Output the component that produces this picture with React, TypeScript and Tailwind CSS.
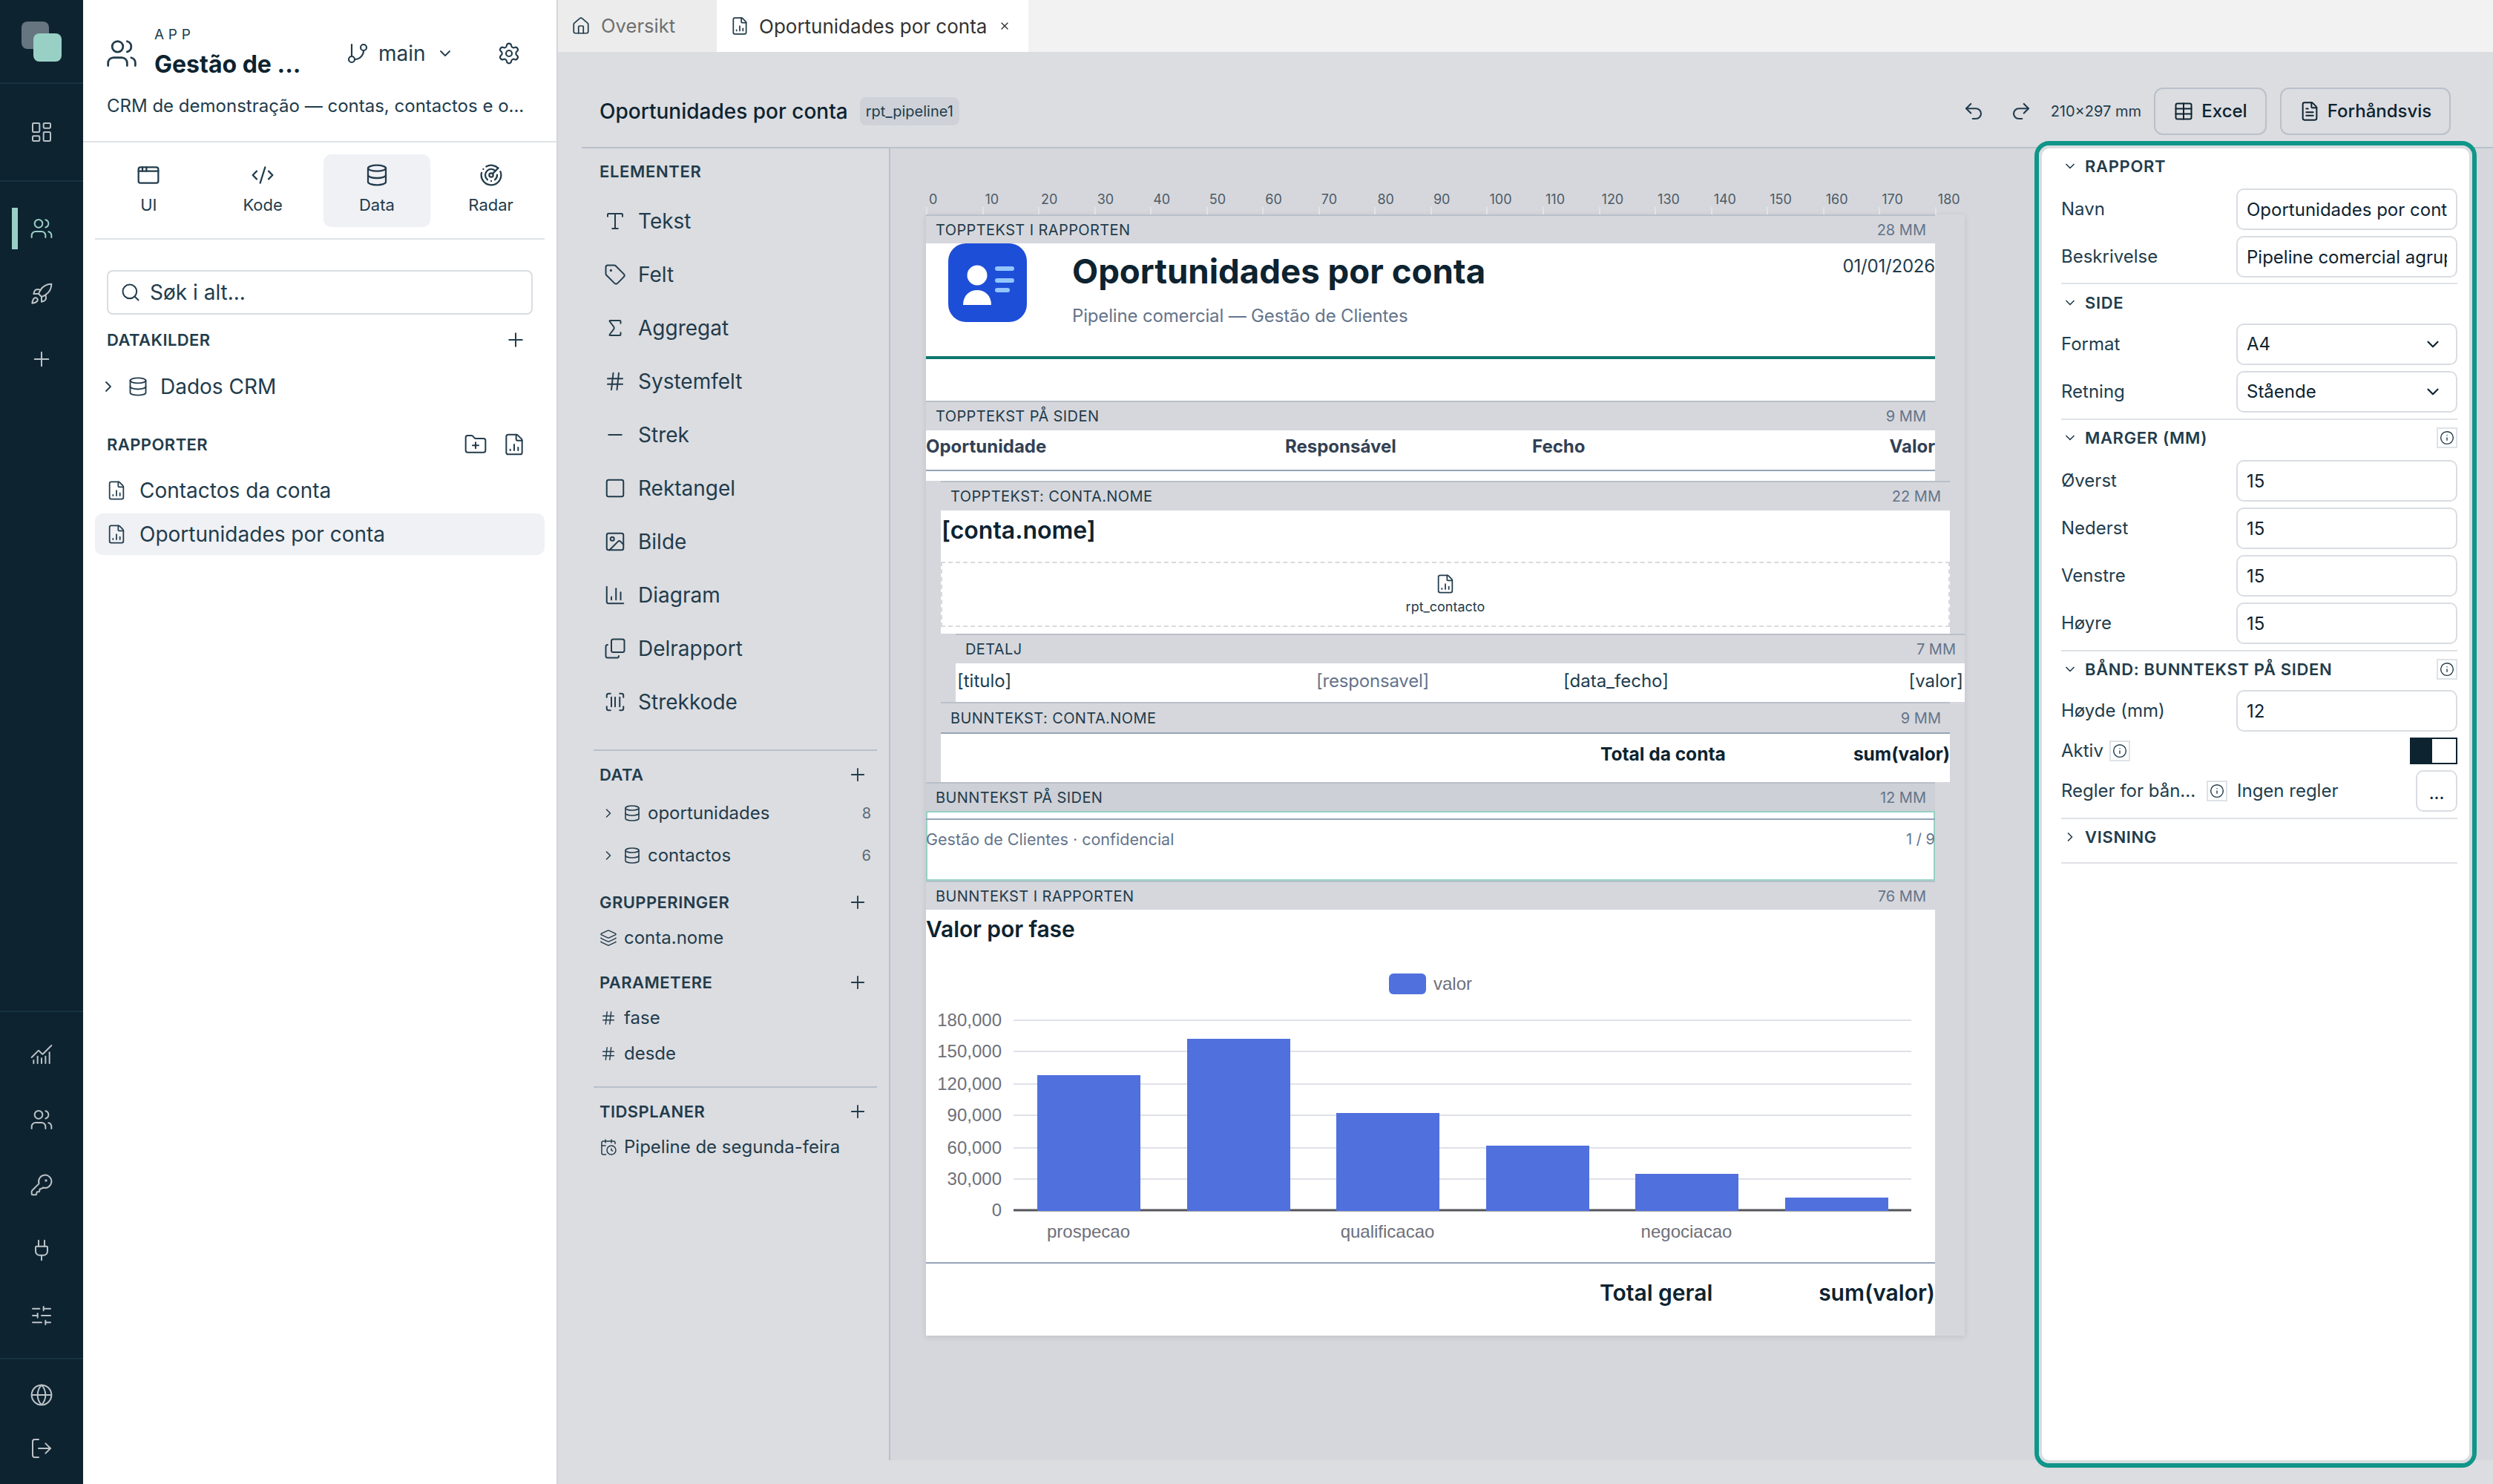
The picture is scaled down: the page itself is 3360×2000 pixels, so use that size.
import type { ReactNode } from 'react';
import {
  AppWindow,
  CalendarClock,
  ChartColumn,
  ChartNoAxesCombined,
  ChevronDown,
  ChevronRight,
  CodeXml,
  Copy,
  Database,
  FileChartColumn,
  FileText,
  FolderPlus,
  GitBranch,
  Globe,
  Hash,
  House,
  Image,
  Info,
  KeyRound,
  Layers,
  LayoutDashboard,
  LogOut,
  Minus,
  Plug,
  Plus,
  Radar,
  Redo2,
  Rocket,
  ScanBarcode,
  Search,
  Settings,
  Sigma,
  SlidersHorizontal,
  Square,
  Table,
  Tag,
  Type,
  Undo2,
  Users,
  X,
} from 'lucide-react';

const elements = [
  { label: 'Tekst', icon: Type },
  { label: 'Felt', icon: Tag },
  { label: 'Aggregat', icon: Sigma },
  { label: 'Systemfelt', icon: Hash },
  { label: 'Strek', icon: Minus },
  { label: 'Rektangel', icon: Square },
  { label: 'Bilde', icon: Image },
  { label: 'Diagram', icon: ChartColumn },
  { label: 'Delrapport', icon: Copy, flip: true },
  { label: 'Strekkode', icon: ScanBarcode },
];

const tabs = [
  { label: 'UI', icon: AppWindow },
  { label: 'Kode', icon: CodeXml },
  { label: 'Data', icon: Database, active: true },
  { label: 'Radar', icon: Radar },
];

const bars = [
  { x: 150, top: 169 },
  { x: 352, top: 120 },
  { x: 553, top: 220 },
  { x: 755, top: 264 },
  { x: 956, top: 302 },
  { x: 1158, top: 334 },
];

const yAxis = [
  { label: '180,000', y: 95 },
  { label: '150,000', y: 137 },
  { label: '120,000', y: 181 },
  { label: '90,000', y: 223 },
  { label: '60,000', y: 267 },
  { label: '30,000', y: 309 },
  { label: '0', y: 351 },
];

const RULER = Array.from({ length: 19 }, (_, i) => i * 10);

function RailDivider() {
  return <div className="h-[2px] w-full bg-[#17323f]" />;
}

function RailIcon({ children }: { children: ReactNode }) {
  return <div className="flex h-[88px] w-full items-center justify-center text-[#bcc2c6]">{children}</div>;
}

function Rail() {
  return (
    <aside className="flex h-full w-[112px] shrink-0 flex-col bg-[#0d2330]">
      <div className="flex h-[111px] items-start pl-[29px] pt-[29px]">
        <div className="h-[37px] w-[37px] rounded-[8px] bg-[#66757f]">
          <div className="ml-[16px] mt-[16px] h-[38px] w-[38px] rounded-[8px] bg-[#99d0c6]" />
        </div>
      </div>
      <RailDivider />
      <div className="flex h-[130px] items-center justify-center text-[#bcc2c6]">
        <LayoutDashboard size={32} strokeWidth={1.5} />
      </div>
      <RailDivider />
      <div className="mt-[19px] flex h-[88px] items-center">
        <div className="ml-[16px] h-[56px] w-[8px] bg-[#99d0c6]" />
        <Users size={32} strokeWidth={1.5} className="ml-[16px] text-[#99d0c6]" />
      </div>
      <RailIcon><Rocket size={32} strokeWidth={1.5} /></RailIcon>
      <RailIcon><Plus size={32} strokeWidth={1.5} /></RailIcon>
      <div className="mt-auto">
        <RailDivider />
        <div className="mt-[13px]">
          <RailIcon><ChartNoAxesCombined size={32} strokeWidth={1.5} /></RailIcon>
          <RailIcon><Users size={32} strokeWidth={1.5} /></RailIcon>
          <RailIcon><KeyRound size={32} strokeWidth={1.5} /></RailIcon>
          <RailIcon><Plug size={32} strokeWidth={1.5} /></RailIcon>
          <RailIcon><SlidersHorizontal size={32} strokeWidth={1.5} /></RailIcon>
        </div>
        <div className="mt-[13px]"><RailDivider /></div>
        <div className="pb-[12px] pt-[12px]">
          <div className="flex h-[72px] items-center justify-center text-[#bcc2c6]"><Globe size={32} strokeWidth={1.5} /></div>
          <div className="flex h-[72px] items-center justify-center text-[#bcc2c6]"><LogOut size={32} strokeWidth={1.5} /></div>
        </div>
      </div>
    </aside>
  );
}

function AppPanel() {
  return (
    <aside className="h-full w-[638px] shrink-0 bg-white text-[#223c4c]">
      {/* Header */}
      <div className="h-[192px] border-b-2 border-[#dfe2e6]">
        <div className="flex h-[126px] items-center pl-[30px] pt-[18px]">
          <Users size={44} strokeWidth={1.5} className="shrink-0 text-[#223c4c]" />
          <div className="ml-[22px] w-[256px]">
            <div className="text-[19px] leading-[24px] tracking-[0.3em]">APP</div>
            <div className="mt-[6px] text-[32px] font-bold leading-[44px] text-[#0d2330]">Gestão de ...</div>
          </div>
          <GitBranch size={32} strokeWidth={1.6} className="ml-[2px]" />
          <span className="ml-[12px] text-[28px]">main</span>
          <ChevronDown size={24} strokeWidth={1.8} className="ml-[14px]" />
          <Settings size={32} strokeWidth={1.6} className="ml-[58px]" />
        </div>
        <div className="pl-[32px] text-[24px] leading-[34px]">CRM de demonstração — contas, contactos e o...</div>
      </div>

      <div className="px-[16px]">
        {/* Tabs */}
        <div className="grid h-[131px] grid-cols-4 gap-x-[9px] border-b-2 border-[#dfe2e6] pt-[16px]">
          {tabs.map(tab => (
            <div
              key={tab.label}
              className={`flex h-[98px] flex-col items-center justify-center rounded-[10px] pb-[4px] ${tab.active ? 'bg-[#f0f1f5]' : ''}`}
            >
              <tab.icon size={32} strokeWidth={1.7} />
              <span className="mt-[10px] text-[22px] leading-[28px]">{tab.label}</span>
            </div>
          ))}
        </div>

        {/* Search */}
        <div className="px-[16px]">
          <div className="mt-[41px] flex h-[60px] items-center rounded-[8px] border-2 border-[#d9dde2] pl-[16px]">
            <Search size={28} strokeWidth={1.7} />
            <span className="ml-[12px] text-[28px]">Søk i alt...</span>
          </div>
          <div className="mt-[14px] flex h-[40px] items-center justify-between">
            <span className="text-[22px] font-semibold tracking-[0.02em]">DATAKILDER</span>
            <Plus size={30} strokeWidth={1.6} className="mr-[8px]" />
          </div>
          <div className="mt-[21px] flex h-[44px] items-center">
            <ChevronRight size={24} strokeWidth={1.8} className="-ml-[10px] shrink-0" />
            <Database size={28} strokeWidth={1.6} className="ml-[14px] shrink-0" />
            <span className="ml-[16px] text-[28px]">Dados CRM</span>
          </div>
          <div className="mt-[36px] flex h-[40px] items-center">
            <span className="text-[22px] font-semibold tracking-[0.02em]">RAPPORTER</span>
            <FolderPlus size={32} strokeWidth={1.5} className="ml-auto" />
            <FileChartColumn size={32} strokeWidth={1.5} className="ml-[20px] mr-[9px]" />
          </div>
        </div>
        <div className="mt-[14px] flex h-[56px] items-center pl-[15px]">
          <FileChartColumn size={28} strokeWidth={1.5} />
          <span className="ml-[17px] text-[28px]">Contactos da conta</span>
        </div>
        <div className="mt-[3px] flex h-[56px] items-center rounded-[10px] bg-[#f0f1f5] pl-[15px]">
          <FileChartColumn size={28} strokeWidth={1.5} />
          <span className="ml-[17px] text-[28px]">Oportunidades por conta</span>
        </div>
      </div>
    </aside>
  );
}

function SectionHeading({ label, className }: { label: string; className: string }) {
  return (
    <div className={`flex h-[40px] items-center justify-between pr-[12px] pl-[8px] ${className}`}>
      <span className="text-[22px] font-semibold tracking-[0.02em]">{label}</span>
      <Plus size={28} strokeWidth={1.6} />
    </div>
  );
}

function TableRow({ label, count, top }: { label: string; count: string; top?: boolean }) {
  return (
    <div className={`flex h-[57px] items-center pl-[10px] pr-[8px] ${top ? 'mt-[3px]' : ''}`}>
      <ChevronRight size={20} strokeWidth={1.8} />
      <Database size={24} strokeWidth={1.6} className="ml-[10px]" />
      <span className="ml-[9px] text-[24px]">{label}</span>
      <span className="ml-auto text-[20px] text-[#596a76]">{count}</span>
    </div>
  );
}

function ItemRow({ icon, label, className }: { icon: ReactNode; label: string; className?: string }) {
  return (
    <div className={`flex h-[48px] items-center pl-[8px] ${className ?? ''}`}>
      <span className="flex w-[24px] shrink-0 justify-center">{icon}</span>
      <span className="ml-[9px] text-[24px]">{label}</span>
    </div>
  );
}

function ElementsPanel() {
  return (
    <div className="h-full w-[448px] shrink-0 border-r-2 border-[#b9c0c9] text-[#223c4c]">
      <div className="flex h-[62px] items-center pl-[56px] text-[22px] font-semibold tracking-[0.03em]">ELEMENTER</div>
      {elements.map(el => (
        <div key={el.label} className="flex h-[72px] items-center pl-[62px]">
          <el.icon size={30} strokeWidth={1.6} className={`shrink-0 ${el.flip ? '-scale-y-100' : ''}`} />
          <span className="ml-[16px] text-[28px]">{el.label}</span>
        </div>
      ))}
      <div className="ml-[48px] mt-[28px] w-[382px]">
        <div className="h-[2px] bg-[#b9c0c9]" />
        <SectionHeading label="DATA" className="mt-[12px]" />
        <TableRow label="oportunidades" count="8" top />
        <TableRow label="contactos" count="6" />
        <SectionHeading label="GRUPPERINGER" className="mt-[15px]" />
        <ItemRow className="mt-[4px]" icon={<Layers size={24} strokeWidth={1.5} />} label="conta.nome" />
        <SectionHeading label="PARAMETERE" className="mt-[16px]" />
        <ItemRow className="mt-[4px]" icon={<Hash size={22} strokeWidth={1.6} />} label="fase" />
        <ItemRow icon={<Hash size={22} strokeWidth={1.6} />} label="desde" />
        <div className="mt-[20px] h-[2px] bg-[#b9c0c9]" />
        <SectionHeading label="TIDSPLANER" className="mt-[12px]" />
        <ItemRow className="mt-[4px]" icon={<CalendarClock size={24} strokeWidth={1.5} />} label="Pipeline de segunda-feira" />
      </div>
    </div>
  );
}

function Band({ label, mm, selected, height = 40 }: { label: string; mm: string; selected?: boolean; height?: 39 | 40 | 41 }) {
  const h = height === 39 ? 'h-[39px]' : height === 41 ? 'h-[41px]' : 'h-[40px]';
  return (
    <div className={`flex items-center justify-between border-t-2 border-[#b9c0c9] pl-[13px] pr-[12px] text-[20px] ${h} ${selected ? 'bg-[#cdd0d6]' : ''}`}>
      <span className="tracking-[0.02em] text-[#223c4c]">{label}</span>
      <span className="text-[#64748b]">{mm}</span>
    </div>
  );
}

function Chart() {
  return (
    <svg width="1360" height="420" viewBox="0 0 1360 420" className="block [font-family:'Liberation_Sans',Arial,sans-serif]">
      <rect x="624" y="32" width="50" height="28" rx="6" fill="#5070dd" />
      <text x="684" y="54" fontSize="24" fill="#6e7079">valor</text>
      {yAxis.slice(0, 6).map(tick => (
        <line key={tick.label} x1="118" x2="1328" y1={tick.y} y2={tick.y} stroke="#dfe1e8" strokeWidth="2" />
      ))}
      {yAxis.map(tick => (
        <text key={tick.label} x="102" y={tick.y + 8} fontSize="24" textAnchor="end" fill="#6e7079">{tick.label}</text>
      ))}
      <line x1="118" x2="1328" y1="351" y2="351" stroke="#54555a" strokeWidth="3" />
      {bars.map(bar => (
        <rect key={bar.x} x={bar.x} y={bar.top} width="139" height={352 - bar.top} fill="#5070dd" />
      ))}
      <text x="219" y="388" fontSize="24" textAnchor="middle" fill="#6e7079">prospecao</text>
      <text x="622" y="388" fontSize="24" textAnchor="middle" fill="#6e7079">qualificacao</text>
      <text x="1025" y="388" fontSize="24" textAnchor="middle" fill="#6e7079">negociacao</text>
    </svg>
  );
}

function ReportLogo() {
  return (
    <svg width="106" height="106" viewBox="0 0 106 106" className="shrink-0">
      <rect width="106" height="106" rx="24" fill="#1d4ed8" />
      <ellipse cx="39" cy="43" rx="13.5" ry="13.5" fill="#ffffff" />
      <path d="M20 83c0-13 8.500-20 19-20s19 7 19 20z" fill="#ffffff" />
      <rect x="63" y="31" width="26" height="6" rx="3" fill="#93c5fd" />
      <rect x="63" y="47" width="26" height="6" rx="3" fill="#93c5fd" />
      <rect x="63" y="60" width="20" height="6" rx="3" fill="#93c5fd" />
    </svg>
  );
}

function ReportCanvas() {
  return (
    <div className="h-full flex-1 pl-[48px] pt-[59px]">
      {/* Ruler */}
      <div className="flex h-[30px] w-[1360px] items-end">
        {RULER.map(mark => (
          <div key={mark} className="w-[75.56px] shrink-0">
            <div className="pl-[4px] text-[18px] leading-[20px] text-[#4b5b68]">{mark}</div>
            <div className="h-[10px] w-[2px] bg-[#e1e4e7]" />
          </div>
        ))}
      </div>

      {/* Page */}
      <div className="h-[1511px] w-[1400px] shadow-[0_2px_8px_rgba(15,23,42,0.10)]">
        <div className="w-[1360px]">
          <Band label="TOPPTEKST I RAPPORTEN" mm="28 MM" height={39} />
          <div className="h-[212px] bg-white">
            <div className="flex h-[152px] items-start">
              <div className="ml-[30px]"><ReportLogo /></div>
              <div className="ml-[61px]">
                <div className="pt-[8px] text-[45.6px] font-bold leading-[60px] text-[#0d2330]">Oportunidades por conta</div>
                <div className="mt-[14px] text-[24px] leading-[32px] tracking-[-0.16px] text-[#64748b]">Pipeline comercial — Gestão de Clientes</div>
              </div>
              <div className="ml-auto pt-[15px] text-[24px] leading-[32px] tracking-[-0.2px] text-[#223c4c]">01/01/2026</div>
            </div>
            <div className="h-[4px] bg-[#0f766e]" />
          </div>
          <Band label="TOPPTEKST PÅ SIDEN" mm="9 MM" />
          <div className="h-[68px] bg-white">
            <div className="grid h-[55px] grid-cols-[484px_333px_1fr_auto] border-b-2 border-[#94a3b8] pt-[4px] text-[24px] font-bold leading-[36px] text-[#334155]">
              <span>Oportunidade</span>
              <span>Responsável</span>
              <span>Fecho</span>
              <span>Valor</span>
            </div>
          </div>
        </div>

        {/* Group header */}
        <div className="ml-[20px] w-[1360px]">
          <Band label="TOPPTEKST: CONTA.NOME" mm="22 MM" />
          <div className="h-[166px] bg-white">
            <div className="h-[69px] pl-[1px] pt-[6px] text-[32px] font-semibold leading-[42px] text-[#0d2330]">[conta.nome]</div>
            <div className="flex h-[88px] flex-col items-center justify-center border-2 border-dashed border-[#d8dade]">
              <FileChartColumn size={28} strokeWidth={1.5} className="text-[#223c4c]" />
              <span className="mt-[6px] text-[18px] leading-[22px] text-[#223c4c]">rpt_contacto</span>
            </div>
          </div>
        </div>

        {/* Detail */}
        <div className="ml-[40px] w-[1360px]">
          <Band label="DETALJ" mm="7 MM" />
          <div className="grid h-[52px] grid-cols-[484px_333px_1fr_auto] items-center bg-white px-[2px] pb-[5px] text-[24px] text-[#223c4c]">
            <span>[titulo]</span>
            <span className="tracking-[-0.2px] text-[#64748b]">[responsavel]</span>
            <span>[data_fecho]</span>
            <span>[valor]</span>
          </div>
        </div>

        {/* Group footer */}
        <div className="ml-[20px] w-[1360px]">
          <Band label="BUNNTEKST: CONTA.NOME" mm="9 MM" height={41} />
          <div className="flex h-[67px] items-center border-t-2 border-[#94a3b8] bg-white pb-[10px] text-[24.500px] font-bold text-[#0d2330]">
            <span className="ml-[889px]">Total da conta</span>
            <span className="ml-auto">sum(valor)</span>
          </div>
        </div>

        <div className="w-[1360px]">
          {/* Page footer, selected */}
          <Band label="BUNNTEKST PÅ SIDEN" mm="12 MM" selected height={39} />
          <div className="h-[94px] border-x-2 border-y-2 border-[#99d0c6] bg-white pt-[8px]">
            <div className="-mx-[2px] flex h-[62px] items-center justify-between border-t-2 border-[#94a3b8] pb-[8px] text-[21.500px] text-[#64748b]">
              <span>Gestão de Clientes · confidencial</span>
              <span className="text-[20px]">1 / 9</span>
            </div>
          </div>
          <Band label="BUNNTEKST I RAPPORTEN" mm="76 MM" height={39} />
          <div className="h-[574px] bg-white">
            <div className="flex h-[54px] items-center pb-[2px] text-[30px] font-semibold tracking-[-0.1px] text-[#0d2330]">Valor por fase</div>
            <Chart />
            <div className="mt-[1px] flex h-[80px] items-center border-t-2 border-[#94a3b8] text-[30px] font-semibold text-[#0d2330]">
              <span className="ml-[908px]">Total geral</span>
              <span className="ml-auto">sum(valor)</span>
            </div>
          </div>
        </div>
      </div>
    </div>
  );
}

function InfoBox({ className }: { className?: string }) {
  return (
    <span className={`flex h-[28px] w-[28px] shrink-0 items-center justify-center border-2 border-[#dfe2e6] ${className ?? ''}`}>
      <Info size={20} strokeWidth={1.7} />
    </span>
  );
}

function PropHeading({ label, open = true, info, className }: { label: string; open?: boolean; info?: boolean; className?: string }) {
  return (
    <div className={`flex h-[48px] items-center ${className ?? ''}`}>
      <span className="flex w-[32px] shrink-0 pl-[2px]">
        {open ? <ChevronDown size={20} strokeWidth={2} /> : <ChevronRight size={20} strokeWidth={2} />}
      </span>
      <span className="text-[22px] font-semibold tracking-[0.03em]">{label}</span>
      {info && <InfoBox className="ml-auto" />}
    </div>
  );
}

function PropInput({ label, value, className }: { label: string; value: string; className?: string }) {
  return (
    <div className={`flex h-[56px] items-center ${className ?? ''}`}>
      <span className="w-[236px] shrink-0 text-[24px]">{label}</span>
      <input
        readOnly
        value={value}
        className="h-[56px] w-[298px] rounded-[10px] border-2 border-[#d9dde2] px-[12px] text-[24px] text-[#0d2330] outline-none"
      />
    </div>
  );
}

function PropSelect({ label, value, className }: { label: string; value: string; className?: string }) {
  return (
    <div className={`flex h-[56px] items-center ${className ?? ''}`}>
      <span className="w-[236px] shrink-0 text-[24px]">{label}</span>
      <div className="flex h-[56px] w-[298px] items-center justify-between rounded-[10px] border-2 border-[#d9dde2] pl-[12px] pr-[18px] text-[24px] text-[#0d2330]">
        <span>{value}</span>
        <ChevronDown size={26} strokeWidth={2} />
      </div>
    </div>
  );
}

function PropDivider({ className }: { className: string }) {
  return <div className={`h-[2px] bg-[#dfe2e6] ${className}`} />;
}

function PropertiesPanel() {
  return (
    <div className="relative z-10 -mt-[10px] mr-[22px] h-[1788px] w-[596px] shrink-0 rounded-[20px] border-[6px] border-[#0f9688]">
      <div className="h-full rounded-[14px] border-4 border-[#d9dce1] bg-white pl-[26px] pr-[16px] text-[#223c4c]">
        <PropHeading label="RAPPORT" />
        <PropInput label="Navn" value="Oportunidades por conta" className="mt-[6px]" />
        <PropInput label="Beskrivelse" value="Pipeline comercial agrupado por conta" className="mt-[8px]" />
        <PropDivider className="mt-[7px]" />
        <PropHeading label="SIDE" className="mt-[1px]" />
        <PropSelect label="Format" value="A4" className="mt-[4px]" />
        <PropSelect label="Retning" value="Stående" className="mt-[8px]" />
        <PropDivider className="mt-[8px]" />
        <PropHeading label="MARGER (MM)" info />
        <PropInput label="Øverst" value="15" className="mt-[6px]" />
        <PropInput label="Nederst" value="15" className="mt-[8px]" />
        <PropInput label="Venstre" value="15" className="mt-[8px]" />
        <PropInput label="Høyre" value="15" className="mt-[8px]" />
        <PropDivider className="mt-[8px]" />
        <PropHeading label="BÅND: BUNNTEKST PÅ SIDEN" info />
        <PropInput label="Høyde (mm)" value="12" className="mt-[4px]" />
        <div className="mt-[8px] flex h-[36px] items-center text-[24px]">
          <span>Aktiv</span>
          <InfoBox className="ml-[8px]" />
          <div className="ml-auto h-[36px] w-[64px] border-2 border-[#0d2330]">
            <div className="h-full w-[28px] bg-[#0d2330]" />
          </div>
        </div>
        <div className="mt-[8px] flex h-[56px] items-center text-[24px]">
          <span className="w-[180px] shrink-0 whitespace-nowrap">Regler for bån...</span>
          <InfoBox className="ml-[16px]" />
          <span className="ml-[13px]">Ingen regler</span>
          <div className="ml-auto flex h-[56px] w-[56px] items-center justify-center rounded-[10px] border-2 border-[#d9dde2] pt-[6px] text-[#0d2330]">...</div>
        </div>
        <PropDivider className="mt-[8px]" />
        <PropHeading label="VISNING" open={false} />
        <PropDivider className="mt-[10px]" />
      </div>
    </div>
  );
}

function Toolbar() {
  return (
    <div className="ml-[32px] flex h-[130px] items-center border-b-2 border-[#b9c0c9] pb-[16px] pl-[24px] pr-[57px] pt-[48px]">
      <span className="text-[28px] font-medium text-[#0d2330]">Oportunidades por conta</span>
      <span className="ml-[16px] rounded-[8px] bg-[#ced2d8] px-[8px] py-[3px] text-[20px] leading-[32px] text-[#223c4c]">rpt_pipeline1</span>
      <Undo2 size={30} strokeWidth={1.7} className="ml-auto text-[#223c4c]" />
      <Redo2 size={30} strokeWidth={1.7} className="ml-[34px] text-[#223c4c]" />
      <span className="ml-[25px] text-[20px] text-[#223c4c]">210×297 mm</span>
      <div className="ml-[17px] flex h-[64px] w-[152px] items-center justify-center rounded-[12px] border-2 border-[#b9c0c9] text-[24px] font-medium text-[#0d2330]">
        <Table size={28} strokeWidth={1.7} />
        <span className="ml-[10px]">Excel</span>
      </div>
      <div className="ml-[18px] flex h-[64px] w-[230px] items-center justify-center rounded-[12px] border-2 border-[#b9c0c9] text-[24px] font-medium text-[#0d2330]">
        <FileText size={28} strokeWidth={1.7} />
        <span className="ml-[10px]">Forhåndsvis</span>
      </div>
    </div>
  );
}

export default function App() {
  return (
    <div className="flex h-[2000px] w-[3360px] overflow-hidden bg-white [font-family:Inter,sans-serif]">
      <Rail />
      <AppPanel />
      <main className="flex h-full min-w-0 flex-1 flex-col border-l-2 border-[#d3d6dc] bg-[#dcdde1]">
        <div className="flex h-[70px] shrink-0 bg-[#f2f2f3] text-[25.600px]">
          <div className="flex w-[214px] items-center bg-[#ececec] pl-[18px] text-[#6f6f6f]">
            <House size={26} strokeWidth={1.6} className="text-[#223c4c]" />
            <span className="ml-[14px]">Oversikt</span>
          </div>
          <div className="flex w-[420px] items-center bg-white pl-[18px] text-[#333333]">
            <FileChartColumn size={26} strokeWidth={1.6} className="text-[#223c4c]" />
            <span className="ml-[13px] text-[26px]">Oportunidades por conta</span>
            <X size={16} strokeWidth={2} className="ml-[16px]" />
          </div>
        </div>
        <Toolbar />
        <div className="flex h-[1768px] shrink-0">
          <ElementsPanel />
          <div className="flex h-full min-w-0 flex-1 bg-[#d6d7dc]">
            <ReportCanvas />
            <PropertiesPanel />
          </div>
        </div>
      </main>
    </div>
  );
}
